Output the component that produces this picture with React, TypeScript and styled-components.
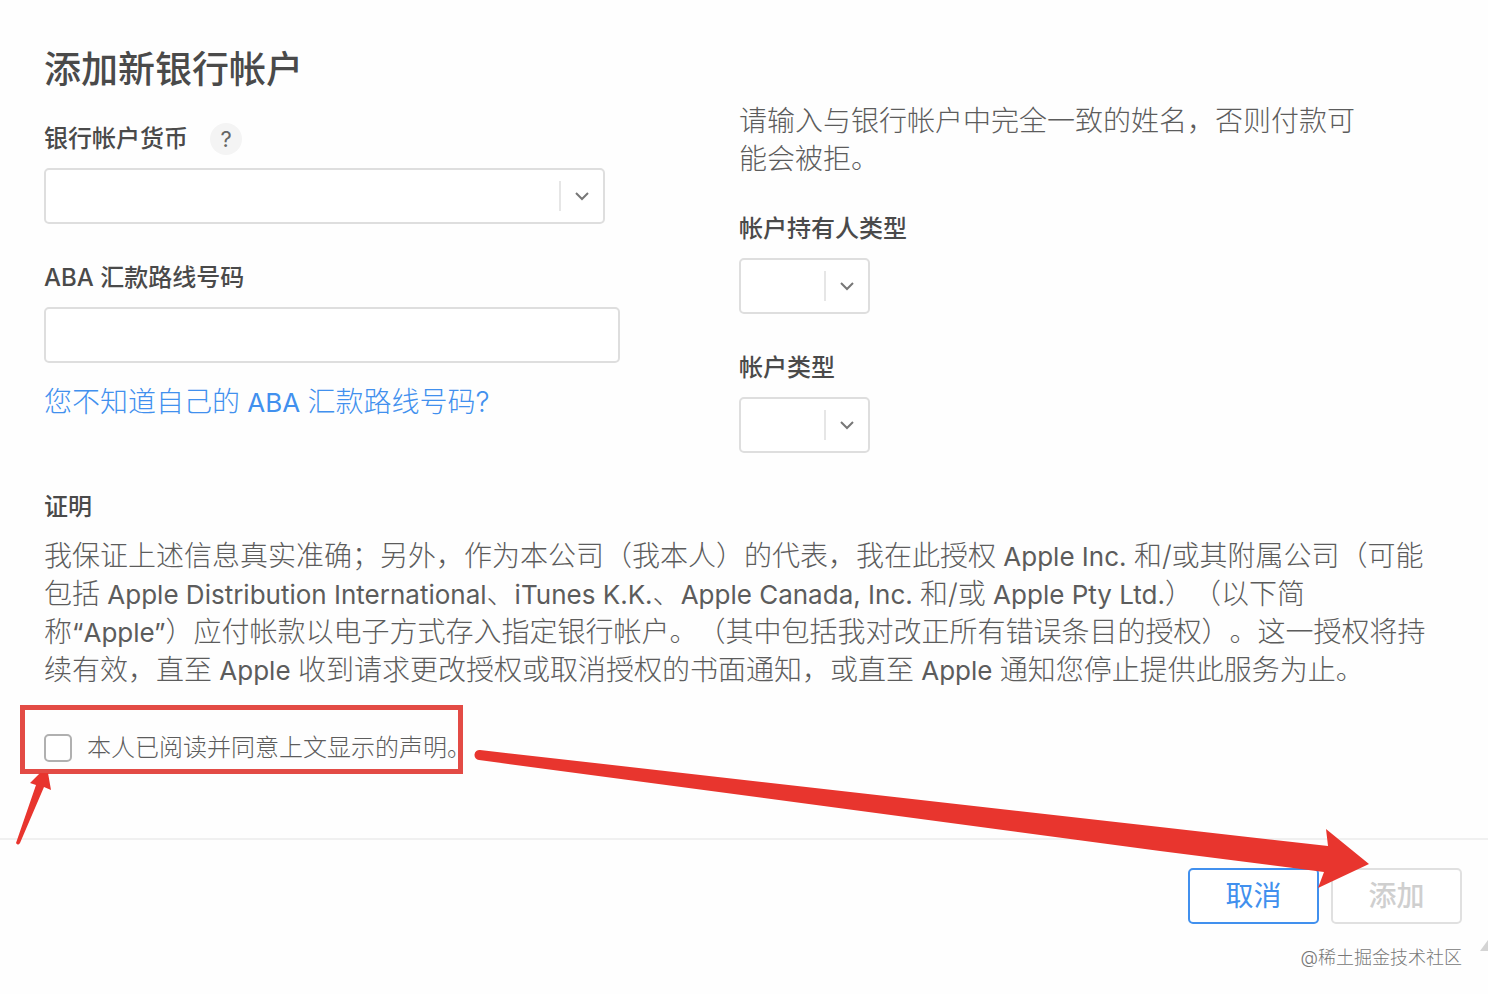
import React from 'react';
import styled, { createGlobalStyle } from 'styled-components';

const GlobalStyle = createGlobalStyle`
  *, *::before, *::after { box-sizing: border-box; }
  body {
    margin: 0;
    background: #fefefe;
    color: #5c5c5c;
    font-family: Inter, 'Noto Sans CJK SC', sans-serif;
    text-spacing-trim: space-all;
  }
`;

const Dialog = styled.main`
  position: relative;
  overflow: hidden;
`;

const Form = styled.form`
  display: flex;
  flex-direction: column;
`;

const Content = styled.div`
  padding: 42px 44px 72px;
`;

const Columns = styled.div`
  display: grid;
  grid-template-columns: minmax(0, 695fr) minmax(0, 705fr);
`;

const LeftColumn = styled.div`
  display: flex;
  flex-direction: column;
  align-items: flex-start;
`;

const RightColumn = styled(LeftColumn)`
  padding-top: 60px;
`;

const Title = styled.h1`
  margin: 0 0 23px;
  font-size: 37px;
  line-height: 56px;
  font-weight: 500;
  color: #4a4a4a;
`;

const Field = styled.div<{ $width: number }>`
  width: 100%;
  max-width: ${(p) => p.$width}px;
  margin-bottom: 36px;
`;

const LabelRow = styled.div`
  display: flex;
  align-items: center;
  gap: 22px;
  height: 36px;
  margin-bottom: 11px;
`;

const Label = styled.label`
  font-size: 24px;
  line-height: 36px;
  font-weight: 500;
  color: #4a4a4a;
  white-space: nowrap;
`;

const HelpButton = styled.button`
  width: 32px;
  height: 32px;
  padding: 0;
  border: 0;
  border-radius: 50%;
  background: #f4f4f4;
  color: #666;
  font: 400 22px/32px Inter, sans-serif;
`;

const boxStyle = `
  display: block;
  width: 100%;
  height: 56px;
  border: 2px solid #dedede;
  border-radius: 5px;
  background: #fff;
  font: inherit;
  font-size: 28px;
  color: #5c5c5c;
  outline: none;
`;

const TextInput = styled.input`
  ${boxStyle}
  padding: 0 16px;
`;

const SelectBox = styled.div`
  position: relative;
`;

const Select = styled.select`
  ${boxStyle}
  appearance: none;
  padding: 0 48px 0 16px;
`;

const SelectMark = styled.svg`
  position: absolute;
  top: 12px;
  right: 0;
  width: 46px;
  height: 32px;
  pointer-events: none;
`;

const HelpLink = styled.a`
  font-size: 28px;
  line-height: 38px;
  font-weight: 300;
  color: #4190ee;
  text-decoration: none;
  margin-top: -16px;
`;

const Text = styled.p`
  margin: 0;
  font-size: 28px;
  line-height: 38px;
  font-weight: 300;
`;

const Latin = styled.span`
  font-size: 26px;
  line-height: 1;
  font-weight: 400;
`;

const Hint = styled(Text)`
  max-width: 632px;
  margin-bottom: 33px;
`;

const SectionTitle = styled.h2`
  margin: 0 0 12px;
  font-size: 24px;
  line-height: 36px;
  font-weight: 500;
  color: #4a4a4a;
`;

const Consent = styled.label`
  display: flex;
  align-items: center;
  gap: 15px;
  margin-top: 41px;
  font-size: 24px;
  line-height: 36px;
  font-weight: 300;
`;

const Checkbox = styled.input`
  appearance: none;
  width: 28px;
  height: 28px;
  margin: 0;
  border: 2px solid #b0b0b0;
  border-radius: 5px;
  background: #fff;
`;

const Footer = styled.footer`
  border-top: 2px solid #f0f0f0;
  padding: 28px 26px 0;
`;

const Actions = styled.div`
  display: flex;
  justify-content: flex-end;
  gap: 12px;
`;

const Button = styled.button<{ $primary?: boolean }>`
  width: 131px;
  height: 56px;
  padding: 0;
  border: 2px solid ${(p) => (p.$primary ? '#4190ee' : '#e0e0e0')};
  border-radius: 5px;
  background: #fff;
  color: ${(p) => (p.$primary ? '#4190ee' : '#cfcfcf')};
  font-family: inherit;
  font-size: 28px;
  line-height: 52px;
  font-weight: ${(p) => (p.$primary ? 400 : 500)};
`;

const Credit = styled.p`
  margin: 20px 0 22px;
  text-align: right;
  font-size: 18px;
  line-height: 28px;
  font-weight: 300;
  color: #777;
`;

const Annotations = styled.svg`
  position: absolute;
  top: 0;
  left: 0;
  pointer-events: none;
`;

const ResizeGrip = styled.svg`
  position: absolute;
  right: 0;
  top: 938px;
`;

function Dropdown({ id }: { id: string }) {
  return (
    <SelectBox>
      <Select id={id} defaultValue="">
        <option value="" />
      </Select>
      <SelectMark viewBox="0 0 46 32" fill="none" aria-hidden="true">
        <path d="M1 1v30" stroke="#e6e6e6" strokeWidth="2" />
        <path d="M17 13l6 6 6-6" stroke="#777" strokeWidth="2" />
      </SelectMark>
    </SelectBox>
  );
}

export default function App() {
  return (
    <>
      <GlobalStyle />
      <Dialog>
        <Form onSubmit={(e) => e.preventDefault()}>
          <Content>
            <Columns>
              <LeftColumn>
                <Title>添加新银行帐户</Title>
                <Field $width={561}>
                  <LabelRow>
                    <Label htmlFor="currency">银行帐户货币</Label>
                    <HelpButton type="button">?</HelpButton>
                  </LabelRow>
                  <Dropdown id="currency" />
                </Field>
                <Field $width={576}>
                  <LabelRow>
                    <Label htmlFor="aba">ABA 汇款路线号码</Label>
                  </LabelRow>
                  <TextInput id="aba" type="text" />
                </Field>
                <HelpLink href="#aba">
                  您不知道自己的<Latin> ABA </Latin>汇款路线号码?
                </HelpLink>
              </LeftColumn>
              <RightColumn>
                <Hint>请输入与银行帐户中完全一致的姓名，否则付款可能会被拒。</Hint>
                <Field $width={131}>
                  <LabelRow>
                    <Label htmlFor="holder">帐户持有人类型</Label>
                  </LabelRow>
                  <Dropdown id="holder" />
                </Field>
                <Field $width={131}>
                  <LabelRow>
                    <Label htmlFor="kind">帐户类型</Label>
                  </LabelRow>
                  <Dropdown id="kind" />
                </Field>
              </RightColumn>
            </Columns>
            <SectionTitle>证明</SectionTitle>
            <Text>
              我保证上述信息真实准确；另外，作为本公司（我本人）的代表，我在此授权
              <Latin> Apple Inc. </Latin>和/或其附属公司（可能
              <br />
              包括<Latin> Apple Distribution International</Latin>、<Latin>iTunes K.K.</Latin>、
              <Latin>Apple Canada, Inc. </Latin>和/或<Latin> Apple Pty Ltd.</Latin>）（以下简
              <br />
              称<Latin>“Apple”</Latin>）应付帐款以电子方式存入指定银行帐户。（其中包括我对改正所有错误条目的授权）。这一授权将持
              <br />
              续有效，直至<Latin> Apple </Latin>收到请求更改授权或取消授权的书面通知，或直至
              <Latin> Apple </Latin>通知您停止提供此服务为止。
            </Text>
            <Consent>
              <Checkbox type="checkbox" />
              本人已阅读并同意上文显示的声明。
            </Consent>
          </Content>
          <Footer>
            <Actions>
              <Button type="button" $primary>取消</Button>
              <Button type="submit" disabled>添加</Button>
            </Actions>
            <Credit>@稀土掘金技术社区</Credit>
          </Footer>
        </Form>
        <ResizeGrip width="8" height="13" viewBox="0 0 8 13" aria-hidden="true">
          <path d="M8 2v11H0z" fill="#d4d4d4" />
        </ResizeGrip>
        <Annotations width="1488" height="994" viewBox="0 0 1488 994" aria-hidden="true">
          <rect x="22.5" y="707.5" width="438" height="64" fill="none" stroke="#e34b45" strokeWidth="5" />
          <path d="M16 843L36 785L30 783L40 773H48L51 790L44 787L20 843Q18 846 16 843z" fill="#e8352e" />
          <path d="M480 750L1160 827L1328 846L1326 829L1369 864L1318 888L1324 872L1160 851L479 760A5 5 0 0 1 480 750z" fill="#e8352e" />
        </Annotations>
      </Dialog>
    </>
  );
}
